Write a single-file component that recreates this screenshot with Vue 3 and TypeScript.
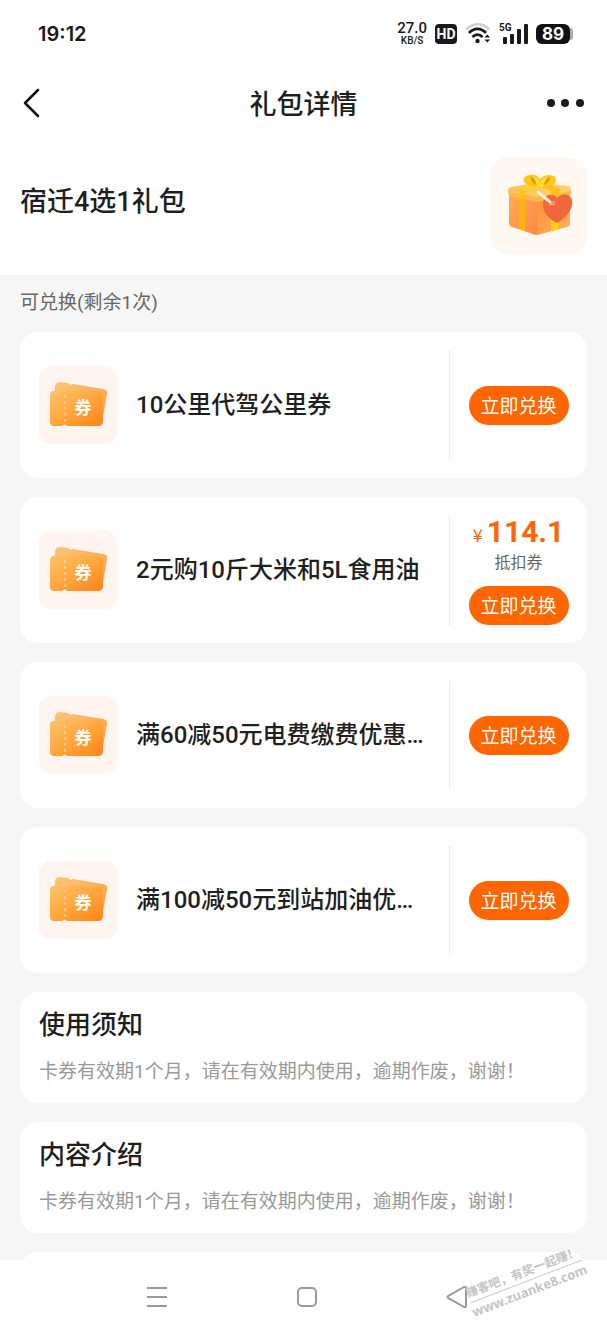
<script setup lang="ts">
interface Coupon {
  id: number
  title: string
  price?: string
}

interface Notice {
  heading: string
  body: string
}

const coupons: Coupon[] = [
  { id: 1, title: '10公里代驾公里券' },
  { id: 2, title: '2元购10斤大米和5L食用油', price: '114.1' },
  { id: 3, title: '满60减50元电费缴费优惠…' },
  { id: 4, title: '满100减50元到站加油优…' },
]

const notices: Notice[] = [
  { heading: '使用须知', body: '卡券有效期1个月，请在有效期内使用，逾期作废，谢谢！' },
  { heading: '内容介绍', body: '卡券有效期1个月，请在有效期内使用，逾期作废，谢谢！' },
]
</script>

<template>
  <div class="page">
    <header class="status">
      <time class="clock">19:12</time>
      <div class="indicators">
        <div class="speed"><span class="rate">27.0</span><span class="unit">KB/S</span></div>
        <span class="hd">HD</span>
        <svg class="wifi" width="26" height="22" viewBox="0 0 26 22" fill="none">
          <path d="M1.5 6.5C8 -0.5 18 -0.5 24 6.5" stroke="#cfcfcf" stroke-width="2.6" />
          <path d="M4 10C9 4.500 16 4.500 21 10" stroke="#1a1a1a" stroke-width="2.800" />
          <path d="M7.500 14C10.500 10.800 14.500 10.800 17.500 14" stroke="#1a1a1a" stroke-width="2.800" />
          <circle cx="12.500" cy="18" r="2.200" fill="#1a1a1a" />
          <path d="M19.500 14.500L22.300 11.500L25.100 14.500ZM19.500 16.500H25.100L22.300 19.500Z" fill="#1a1a1a" />
        </svg>
        <div class="signal">
          <svg width="29" height="22" viewBox="0 0 29 22" fill="#1a1a1a">
            <rect x="4" y="14" width="4" height="7" rx="1" />
            <rect x="11" y="11" width="4" height="10" rx="1" />
            <rect x="18" y="6" width="4" height="15" rx="1" />
            <rect x="25" y="1" width="4" height="20" rx="1" />
          </svg>
          <span class="net">5G</span>
        </div>
        <div class="battery"><span class="level">89</span><span class="cap"></span></div>
      </div>
    </header>

    <nav class="topbar">
      <button class="icon-button" type="button" aria-label="返回">
        <svg width="20" height="32" viewBox="0 0 20 32" fill="none">
          <path d="M17 3L4 16L17 29" stroke="#111" stroke-width="2.500" stroke-linecap="round" stroke-linejoin="round" />
        </svg>
      </button>
      <h1>礼包详情</h1>
      <button class="icon-button" type="button" aria-label="更多">
        <svg width="40" height="32" viewBox="0 0 40 32" fill="#1a1a1a">
          <circle cx="5" cy="16" r="4" />
          <circle cx="19" cy="16" r="4" />
          <circle cx="34" cy="16" r="4" />
        </svg>
      </button>
    </nav>

    <section class="hero">
      <h2>宿迁4选1礼包</h2>
      <div class="gift">
        <svg width="96" height="97" viewBox="0 0 96 97">
          <defs>
            <linearGradient id="boxLeft" x1="0" y1="0" x2="1" y2="1">
              <stop offset="0" stop-color="#ffad4c" />
              <stop offset="1" stop-color="#fb8747" />
            </linearGradient>
            <linearGradient id="boxRight" x1="0" y1="0" x2="1" y2="1">
              <stop offset="0" stop-color="#fc8d3c" />
              <stop offset="1" stop-color="#ffb35a" />
            </linearGradient>
            <linearGradient id="lid" x1="0" y1="0" x2="1" y2="0">
              <stop offset="0" stop-color="#ffc258" />
              <stop offset="1" stop-color="#ffd36f" />
            </linearGradient>
          </defs>
          <path d="M18 38L46 42V78Q43 78 39 76L21 70Q18 69 18 66Z" fill="url(#boxLeft)" />
          <path d="M46 42L79 37V66Q79 69 76 70L50 77Q48 78 46 78Z" fill="url(#boxRight)" />
          <path d="M28 40L34 41V74L28 72Z" fill="#ffb313" />
          <path d="M60 38L68 37V72L60 74Z" fill="#ffce16" />
          <path d="M20 30L44 26Q48 25 52 26L78 29Q80 30 80 33V36Q80 38 77 39L49 44Q46 45 43 44L20 39Q17 38 17 36V33Q17 31 20 30Z" fill="url(#lid)" />
          <path d="M18 35L46 40L80 34V36Q80 38 77 39L49 44Q46 45 43 44L20 39Q18 38 18 35Z" fill="#ffb64c" />
          <path d="M28 33L43 28L50 31L34 35V42L28 41Z" fill="#ffc31e" />
          <path d="M51 30L59 28L70 32L66 38L60 39V34Z" fill="#ffbe1a" />
          <path d="M48 31C38 30 31 26 33 21C35 17 43 17 46 19L49 22L53 19C58 17 64 18 65 22C66 28 58 31 50 31Z" fill="#ffc814" />
          <path d="M47 30C36 27 29 31 33 34L39 33L49 31Z" fill="#ffd628" />
          <path d="M39 20Q46 20 47 29Q41 27 39 20ZM51 28Q53 20 59 20Q59 27 51 28Z" fill="#e99a12" />
          <path d="M41 19Q47 21 49 26Q52 20 58 19Q54 22 52 30H46Q45 22 41 19Z" fill="#ffdf32" />
          <path d="M66 66C57 62 51 54 52 46C53 38 61 35 66 41C70 36 79 36 81 43C83 52 74 62 66 66Z" fill="#f2673a" />
          <path d="M47 35L59 45" stroke="#fff0dc" stroke-width="3" stroke-linecap="round" />
          <path d="M58 49Q61 44 64 45M58 47Q61 48 64 47" fill="none" stroke="#ffb58f" stroke-width="1" />
        </svg>
      </div>
    </section>

    <main class="content">
      <p class="remaining">可兑换(剩余1次)</p>

      <article v-for="coupon in coupons" :key="coupon.id" class="coupon">
        <div class="thumb">
          <svg width="78" height="78" viewBox="0 0 78 78">
            <defs>
              <linearGradient :id="`front${coupon.id}`" x1="0" y1="0" x2="1" y2="1">
                <stop offset="0" stop-color="#ffc267" />
                <stop offset="0.500" stop-color="#ffa63e" />
                <stop offset="1" stop-color="#ff8316" />
              </linearGradient>
              <linearGradient :id="`back${coupon.id}`" x1="0" y1="0" x2="1" y2="1">
                <stop offset="0" stop-color="#ffc57a" />
                <stop offset="1" stop-color="#ff9a38" />
              </linearGradient>
            </defs>
            <path d="M16 20Q17 16 21 16L29 17Q31 20 34 18L64 23Q69 24 68 28L63 56Q62 58 60 58L14 51Z" :fill="`url(#back${coupon.id})`" />
            <path d="M15 25H23Q25 28 28 25H59Q64 25 64 30V55Q64 60 59 60H28Q26 57 23 60H15Q11 60 11 56V29Q11 25 15 25Z" :fill="`url(#front${coupon.id})`" />
            <path d="M26 30V56" stroke="#ffd18b" stroke-width="2" stroke-linecap="round" stroke-dasharray="1 5" />
            <text x="44" y="48" class="ticket-text">券</text>
          </svg>
        </div>
        <h3>{{ coupon.title }}</h3>
        <div class="action">
          <template v-if="coupon.price">
            <p class="price"><span class="yen">¥</span>{{ coupon.price }}</p>
            <p class="kind">抵扣券</p>
          </template>
          <button class="redeem" type="button">立即兑换</button>
        </div>
      </article>

      <section v-for="notice in notices" :key="notice.heading" class="notice">
        <h3>{{ notice.heading }}</h3>
        <p>{{ notice.body }}</p>
      </section>
      <section class="notice"></section>
    </main>

    <footer class="system">
      <button class="icon-button" type="button" aria-label="菜单">
        <svg width="22" height="22" viewBox="0 0 22 22" stroke="#999" stroke-width="2">
          <path d="M1 2H21M1 11H21M1 20H21" />
        </svg>
      </button>
      <button class="icon-button" type="button" aria-label="主页">
        <svg width="22" height="22" viewBox="0 0 22 22" fill="none" stroke="#999" stroke-width="2">
          <rect x="2" y="2" width="18" height="18" rx="4" />
        </svg>
      </button>
      <button class="icon-button" type="button" aria-label="后退">
        <svg width="22" height="22" viewBox="0 0 22 22" fill="none" stroke="#999" stroke-width="2" stroke-linejoin="round">
          <path d="M2 10.200Q1 11 2 11.800L18 21Q20 21.500 20 20V2Q20 0.500 18 1Z" />
        </svg>
      </button>
      <div class="watermark">
        <span class="slogan">赚客吧，有奖一起赚！</span>
        <span class="site">www.zuanke8.com</span>
      </div>
    </footer>
  </div>
</template>

<style>
body {
  margin: 0;
}
</style>

<style scoped>
.page {
  display: flex;
  flex-direction: column;
  height: 100vh;
  overflow: hidden;
  background: #fff;
  color: #1f1f1f;
  font-family: Roboto, "Noto Sans CJK SC", sans-serif;
}

h1,
h2,
h3,
p {
  margin: 0;
  font-weight: 500;
}

button {
  border: 0;
  padding: 0;
  font-family: inherit;
  cursor: pointer;
}

svg {
  display: block;
}

.icon-button {
  background: none;
}

.status {
  display: flex;
  flex: none;
  align-items: center;
  justify-content: space-between;
  height: 67px;
  padding: 0 34px 0 38px;
  color: #1a1a1a;
}

.clock {
  font-family: Inter, sans-serif;
  font-size: 20px;
  font-weight: 600;
}

.indicators {
  display: flex;
  align-items: center;
  gap: 8px;
}

.speed {
  display: flex;
  flex-direction: column;
  align-items: center;
  font-weight: 500;
}

.rate {
  font-size: 15px;
  line-height: 14px;
}

.unit {
  font-size: 10px;
  line-height: 12px;
}

.hd {
  width: 22px;
  border-radius: 4px;
  background: #1a1a1a;
  color: #fff;
  font-size: 14px;
  font-weight: 700;
  line-height: 20px;
  text-align: center;
}

.signal {
  position: relative;
}

.net {
  position: absolute;
  top: 0;
  left: 0;
  font-size: 10px;
  font-weight: 700;
  line-height: 10px;
}

.battery {
  display: flex;
  align-items: center;
}

.level {
  width: 34px;
  border-radius: 6px;
  background: #111;
  color: #fff;
  font-family: Inter, sans-serif;
  font-size: 17px;
  font-weight: 700;
  line-height: 20px;
  text-align: center;
}

.cap {
  width: 3px;
  height: 12px;
  border-radius: 0 3px 3px 0;
  background: #aaa;
}

.topbar {
  display: flex;
  flex: none;
  align-items: center;
  justify-content: space-between;
  height: 72px;
  padding: 0 21px;
}

.topbar .icon-button {
  display: flex;
  width: 40px;
}

.topbar h1 {
  padding-top: 4px;
  font-size: 27px;
  line-height: 40px;
}

.hero {
  display: flex;
  flex: none;
  align-items: flex-start;
  justify-content: space-between;
  padding: 18px 20px 21px;
}

.hero h2 {
  padding-top: 25px;
  font-size: 27px;
  line-height: 40px;
}

.gift {
  border-radius: 16px;
  background: #fff7f1;
}

.content {
  display: flex;
  flex: 1;
  flex-direction: column;
  gap: 19px;
  min-height: 0;
  overflow: hidden;
  padding: 18px 20px 0;
  background: #f6f6f6;
}

.remaining {
  flex: none;
  color: #666;
  font-size: 19px;
  font-weight: 400;
  line-height: 20px;
}

.coupon {
  display: flex;
  flex: none;
  align-items: center;
  min-height: 146px;
  border-radius: 18px;
  background: #fff;
}

.thumb {
  flex: none;
  margin: 0 19px;
  border-radius: 12px;
  background: #fff4ef;
}

.ticket-text {
  fill: #fff;
  font-family: "Noto Sans CJK SC", sans-serif;
  font-size: 17px;
  font-weight: 700;
  text-anchor: middle;
}

.coupon h3 {
  flex: 1;
  min-width: 0;
  overflow: hidden;
  font-size: 24px;
  line-height: 36px;
  text-overflow: ellipsis;
  white-space: nowrap;
}

.action {
  display: flex;
  flex: none;
  flex-direction: column;
  align-items: center;
  justify-content: center;
  width: 137px;
  min-height: 108px;
  border-left: 1px dotted #ddd;
}

.price {
  display: flex;
  align-items: baseline;
  gap: 4px;
  height: 36px;
  color: #ff6500;
  font-size: 30px;
  font-weight: 700;
  line-height: 32px;
}

.yen {
  font-family: "Noto Sans CJK SC", sans-serif;
  font-size: 18px;
  font-weight: 400;
  line-height: 18px;
}

.kind {
  margin-bottom: 12px;
  color: #666;
  font-size: 16px;
  font-weight: 400;
  line-height: 22px;
}

.redeem {
  width: 100px;
  height: 39px;
  padding-bottom: 2px;
  border-radius: 20px;
  background: #ff6500;
  color: #fff;
  font-size: 19px;
}

.notice {
  flex: none;
  min-height: 73px;
  padding: 13px 19px 17px;
  border-radius: 18px;
  background: #fff;
}

.notice h3 {
  font-size: 26px;
  line-height: 40px;
}

.notice p {
  margin-top: 13px;
  color: #999;
  font-size: 19px;
  font-weight: 400;
  line-height: 28px;
}

.system {
  display: flex;
  flex: none;
  align-items: center;
  justify-content: center;
  gap: 128px;
  position: relative;
  height: 74px;
  padding-left: 7px;
  background: #fff;
}

.watermark {
  display: flex;
  flex-direction: column;
  align-items: center;
  position: absolute;
  top: 3px;
  right: 20px;
  color: #c4c4c4;
  font-weight: 700;
  transform: rotate(-21deg);
  white-space: nowrap;
}

.slogan {
  border-bottom: 1px solid #ccc;
  font-size: 12px;
  line-height: 18px;
}

.site {
  font-family: "Noto Sans", sans-serif;
  font-size: 13px;
  line-height: 18px;
}
</style>
